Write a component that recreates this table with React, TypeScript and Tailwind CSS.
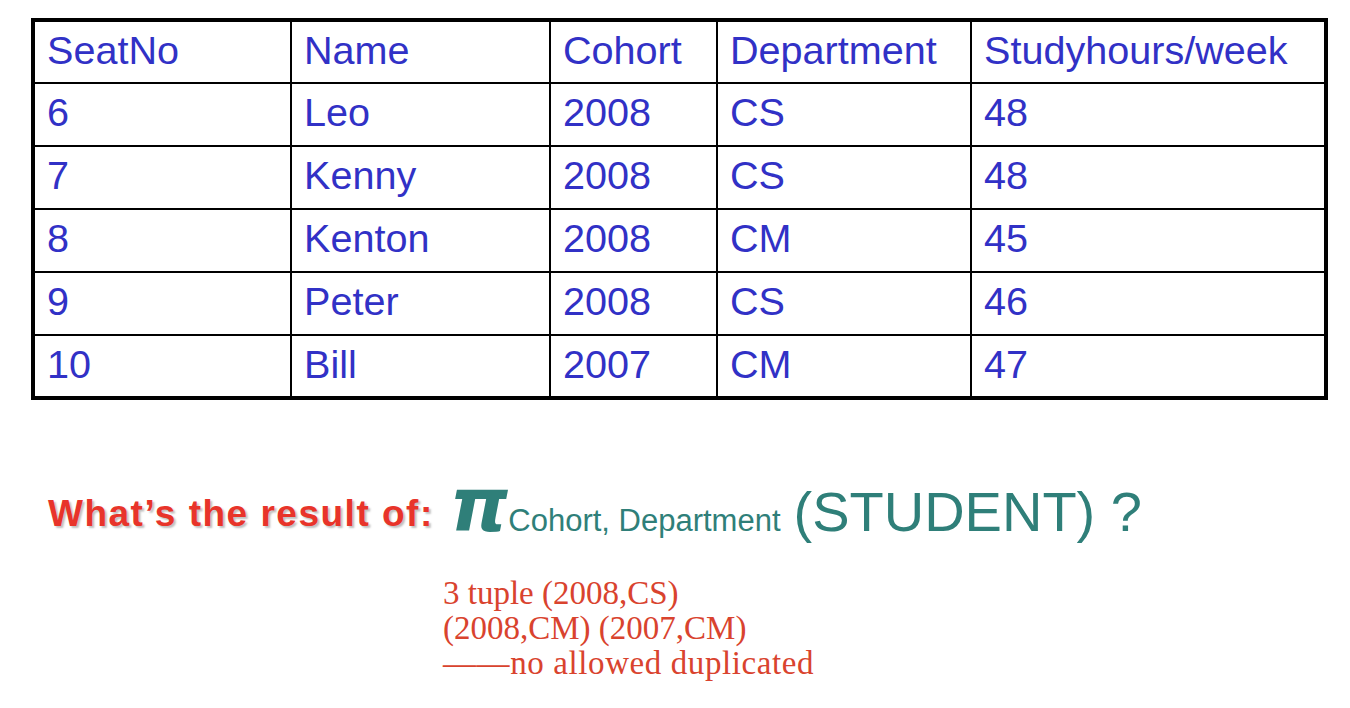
const COLS = ["w-[257px]", "w-[259px]", "w-[167px]", "w-[254px]", "w-[352px]"];

const HEAD = ["SeatNo", "Name", "Cohort", "Department", "Studyhours/week"];

const ROWS = [
  ["6", "Leo", "2008", "CS", "48"],
  ["7", "Kenny", "2008", "CS", "48"],
  ["8", "Kenton", "2008", "CM", "45"],
  ["9", "Peter", "2008", "CS", "46"],
  ["10", "Bill", "2007", "CM", "47"],
];

function Row({ cells, height, last }: { cells: string[]; height: string; last?: boolean }) {
  return (
    <div className={`flex ${height} ${last ? "" : "border-b-2 border-black"}`}>
      {cells.map((c, i) => (
        <div
          key={i}
          className={`${COLS[i]} flex items-center pl-[12px] pb-[3px] ${i < 4 ? "border-r-2 border-black" : ""}`}
        >
          {c}
        </div>
      ))}
    </div>
  );
}

export default function App() {
  return (
    <div className="w-[1350px] h-[708px] bg-white overflow-hidden">
      <div className="pt-[18px] pl-[31px]">
        <div
          className="w-[1297px] border-4 border-black text-[#3131c6] text-[39.6px] leading-none"
          style={{ fontFamily: '"Liberation Sans", Arial, sans-serif' }}
        >
          <Row cells={HEAD} height="h-[62px]" />
          {ROWS.map((r, i) => (
            <Row key={r[0]} cells={r} height={i === ROWS.length - 1 ? "h-[60px]" : "h-[63px]"} last={i === ROWS.length - 1} />
          ))}
        </div>
      </div>

      <div
        className="mt-[68px] h-[80px] pl-[48px] flex items-baseline leading-none"
        style={{ fontFamily: '"Liberation Sans", Arial, sans-serif' }}
      >
        <span className="relative -top-[5px] text-[37px] font-bold tracking-[1.5px] text-[#e8342a] [text-shadow:2px_2px_2px_rgba(0,0,0,0.25)]">
          What’s the result of:
        </span>
        <span
          className="ml-[16px] text-[74px] font-bold italic text-[#2f7f79]"
          style={{ fontFamily: '"DejaVu Sans", sans-serif' }}
        >
          π
        </span>
        <span className="text-[31px] text-[#2f7f79]">Cohort, Department</span>
        <span className="ml-[13px] text-[56px] text-[#2f7f79]">(STUDENT) ?</span>
      </div>

      <div
        className="mt-[28px] pl-[443px] text-[33px] leading-[35px] text-[#d9432e]"
        style={{ fontFamily: '"Liberation Serif", "Times New Roman", serif' }}
      >
        <div>3 tuple (2008,CS)</div>
        <div>(2008,CM) (2007,CM)</div>
        <div className="tracking-[0.6px]">——no allowed duplicated</div>
      </div>
    </div>
  );
}
